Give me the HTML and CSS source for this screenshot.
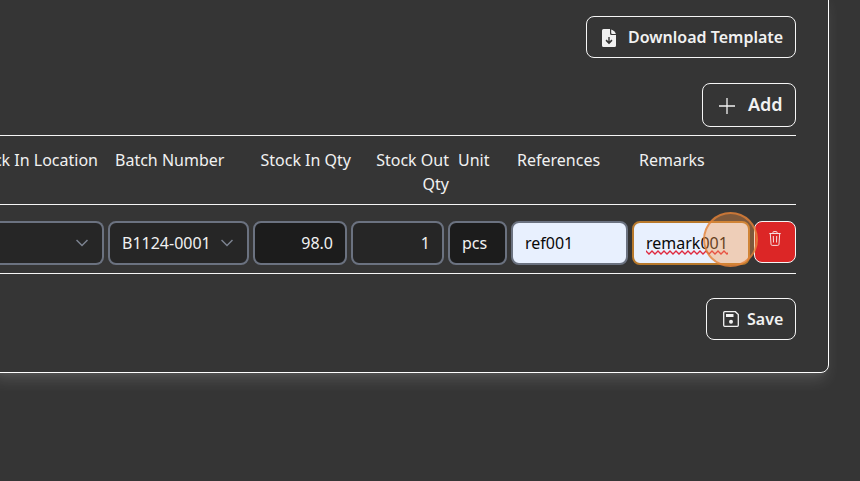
FILE: index.html
```html
<!DOCTYPE html>
<html lang="en">
<head>
<meta charset="utf-8">
<title>Stock</title>
<link rel="stylesheet" href="styles.css">
</head>
<body>
<main class="card">
  <div class="actions">
    <button class="btn download">
      <svg width="16" height="18" viewBox="0 0 16 18"><path fill="currentColor" fill-rule="evenodd" d="M2.500 0H9v4.500A1.500 1.500 0 0 0 10.500 6H15v10.500A1.500 1.500 0 0 1 13.500 18h-11A1.500 1.500 0 0 1 1 16.500v-15A1.500 1.500 0 0 1 2.500 0zM7.300 8v4.300L5.600 10.600l-1.100 1.100L8 15.200l3.500-3.500-1.100-1.100-1.700 1.700V8z"/><path fill="currentColor" d="M10.200.4c2.300.7 4 2.400 4.700 4.600h-3.600a1.100 1.100 0 0 1-1.100-1.100z"/></svg>
      <span>Download Template</span>
    </button>
    <button class="btn add">
      <svg width="16" height="16" viewBox="0 0 16 16" fill="none" stroke="currentColor" stroke-width="1.300"><path d="M8 0v16M0 8h16"/></svg>
      <span>Add</span>
    </button>
  </div>
  <div class="table">
    <div class="row head">
      <span class="end">Stock In Location</span>
      <span class="batch">Batch Number</span>
      <span class="end">Stock In Qty</span>
      <span class="end">Stock Out<br>Qty</span>
      <span class="start">Unit</span>
      <span class="start">References</span>
      <span class="start">Remarks</span>
    </div>
    <div class="row body">
      <div class="field select location"><span></span><svg class="chevron" viewBox="0 0 12 8"><path d="M.5 1L6 6.500 11.500 1"/></svg></div>
      <div class="field select"><span>B1124-0001</span><svg class="chevron" viewBox="0 0 12 8"><path d="M.5 1L6 6.500 11.500 1"/></svg></div>
      <div class="field number readonly">98.0</div>
      <div class="field number">1</div>
      <div class="field readonly">pcs</div>
      <div class="field filled">ref001</div>
      <div class="field filled focused"><span class="misspelled">remark001<svg class="squiggle" width="82" height="5" viewBox="0 0 82 5"><defs><pattern id="wave" width="6" height="5" patternUnits="userSpaceOnUse"><path d="M-1.500 -.5L0 1l3 3 3-3 1.500-1.500" fill="none" stroke="#df2940" stroke-width="1.300"/></pattern></defs><rect width="82" height="5" fill="url(#wave)"/></svg></span><i class="pointer"></i></div>
      <button class="delete" aria-label="Delete"><svg width="12" height="15" viewBox="0 0 12 15" fill="none" stroke="currentColor"><path d="M.3 2.500h11.400M4 2.300V1.200Q4 .6 4.600.6h2.800Q8 .6 8 1.200v1.100M1.300 2.700l.7 10.500q.1 1.200 1.200 1.200h5.600q1.100 0 1.200-1.200l.7-10.500M4.300 5l.2 6.500M7.700 5l-.2 6.500"/></svg></button>
    </div>
  </div>
  <button class="btn save">
    <svg width="16" height="16" viewBox="0 0 16 16"><path d="M1.700.7h10.700l2.900 2.900v10.700a1 1 0 0 1-1 1H1.700a1 1 0 0 1-1-1V1.700a1 1 0 0 1 1-1z" fill="none" stroke="currentColor" stroke-width="1.300"/><path d="M3 3h7.500v3H3z" fill="currentColor"/><circle cx="8" cy="10.700" r="2" fill="currentColor"/></svg>
    <span>Save</span>
  </button>
</main>
</body>
</html>
```
FILE: styles.css
```css
* { box-sizing: border-box; }

body {
  margin: 0;
  height: 481px;
  overflow: hidden;
  background: #353535;
  color: #f1f1f1;
  font: 16px/24px "Noto Sans", sans-serif;
}

.card {
  display: flex;
  flex-direction: column;
  width: 839px;
  height: 383px;
  margin: -10px 0 0 -10px;
  padding: 26px 32px 0 9px;
  border: 1px solid #fff;
  border-radius: 8px;
  box-shadow: 0 10px 15px -3px rgb(255 255 255 / 13%), 0 4px 6px -4px rgb(255 255 255 / 10%);
}

.actions {
  display: flex;
  flex-direction: column;
  align-items: flex-end;
  gap: 25px;
  margin-top: -1px;
}

.btn {
  display: flex;
  align-items: center;
  height: 42px;
  padding: 0 12px;
  border: 1px solid #f5f5f5;
  border-radius: 8px;
  background: transparent;
  color: #f1f1f1;
  font: 600 16px/24px "Noto Sans", sans-serif;
  white-space: nowrap;
}

.btn svg { flex: none; }
.download { width: 210px; gap: 11px; padding-left: 14px; }
.download svg { margin-top: 2px; }
.add { width: 94px; height: 44px; padding: 0 12px 2px 16px; gap: 13px; font-size: 18px; }
.add svg { margin-top: 4px; }
.save { width: 90px; align-self: flex-end; margin-top: 24px; padding-left: 16px; gap: 8px; }

.table { margin-top: 8px; border-top: 1px solid #f5f5f5; }
.row { display: grid; border-bottom: 1px solid #f5f5f5; }

.head {
  height: 69px;
  padding-top: 12px;
  grid-template-columns: 98px 153px 100px 98px 59px 122px 1fr;
  white-space: nowrap;
}
.end { justify-self: end; text-align: right; }
.start { padding-left: 9px; }
.batch { padding-left: 17px; }

.body {
  height: 69px;
  padding-top: 16px;
  align-items: start;
  grid-template-columns: 104px 141px 94px 93px 59px 117px 118px 42px;
  column-gap: 4px;
}

.field {
  position: relative;
  display: flex;
  align-items: center;
  justify-content: space-between;
  height: 44px;
  padding: 0 12px;
  border: 2px solid #6b7280;
  border-radius: 8px;
  background: #262626;
}
.select { padding-right: 14px; }
.location { border-left: 0; border-radius: 0 8px 8px 0; }
.number { justify-content: flex-end; }
.readonly { background: #1c1c1c; }
.filled { background: #e8f0fe; color: #080808; }
.focused { border-color: #b8792c; }

.chevron {
  width: 12px;
  height: 8px;
  fill: none;
  stroke: #7b8290;
  stroke-width: 1.5;
}

.misspelled { position: relative; }
.squiggle { position: absolute; left: 0; bottom: 0; }

.pointer {
  position: absolute;
  z-index: 1;
  left: 69px;
  top: -11px;
  width: 55px;
  height: 55px;
  border: 2px solid rgb(225 128 55 / 75%);
  border-radius: 50%;
  background: rgb(246 151 70 / 38%);
}

.delete {
  display: flex;
  justify-content: center;
  height: 42px;
  padding: 9px 0 0;
  border: 1px solid #f5f5f5;
  border-radius: 8px;
  background: #dc2626;
  color: #f5dede;
}
```
